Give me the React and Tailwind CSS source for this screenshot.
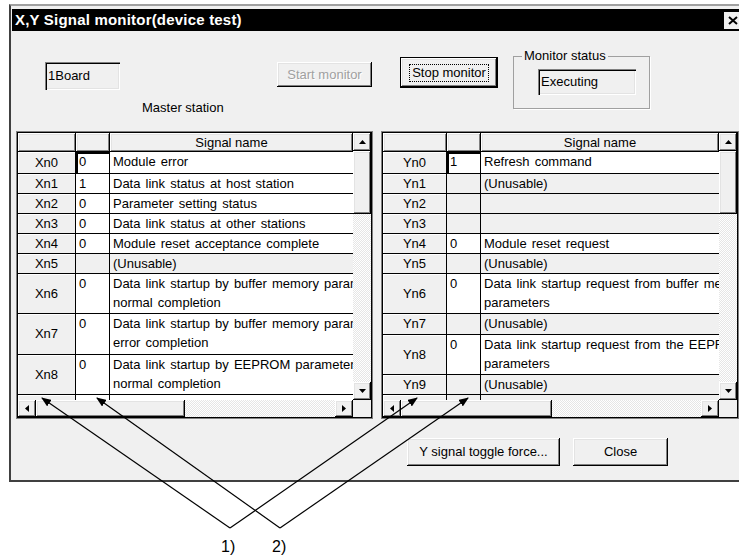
import React from "react";

const raised =
  "shadow-[inset_-1px_-1px_#000,inset_1px_1px_#fff,inset_-2px_-2px_#808080,inset_2px_2px_#e3e3e3]";
const sunken =
  "shadow-[inset_1px_1px_#808080,inset_2px_2px_#000,inset_-1px_-1px_#fff,inset_-2px_-2px_#e3e3e3]";
const dither =
  "bg-[image:repeating-conic-gradient(#fff_0_25%,#e6e6e6_0_50%)] bg-[length:2px_2px]";

const xRows = [
  { id: "Xn0", v: "0", text: ["Module error"], h: "h-[22px]", white: true, focus: true },
  { id: "Xn1", v: "1", text: ["Data link status at host station"], h: "h-[20px]", white: true },
  { id: "Xn2", v: "0", text: ["Parameter setting status"], h: "h-[20px]", white: true },
  { id: "Xn3", v: "0", text: ["Data link status at other stations"], h: "h-[20px]", white: true },
  { id: "Xn4", v: "0", text: ["Module reset acceptance complete"], h: "h-[20px]", white: true },
  { id: "Xn5", v: "", text: ["(Unusable)"], h: "h-[20px]" },
  { id: "Xn6", v: "0", text: ["Data link startup by buffer memory parameter", "normal completion"], h: "h-[40px]", white: true },
  { id: "Xn7", v: "0", text: ["Data link startup by buffer memory parameter", "error completion"], h: "h-[41px]", white: true },
  { id: "Xn8", v: "0", text: ["Data link startup by EEPROM parameter", "normal completion"], h: "h-[40px]", white: true },
  { id: "Xn9", v: "0", text: ["Data link startup by EEPROM parameter", "error completion"], h: "h-[40px]", white: true },
];

const yRows = [
  { id: "Yn0", v: "1", text: ["Refresh command"], h: "h-[22px]", white: true, focus: true },
  { id: "Yn1", v: "", text: ["(Unusable)"], h: "h-[20px]" },
  { id: "Yn2", v: "", text: [""], h: "h-[20px]" },
  { id: "Yn3", v: "", text: [""], h: "h-[20px]" },
  { id: "Yn4", v: "0", text: ["Module reset request"], h: "h-[20px]", white: true },
  { id: "Yn5", v: "", text: ["(Unusable)"], h: "h-[20px]" },
  { id: "Yn6", v: "0", text: ["Data link startup request from buffer memory", "parameters"], h: "h-[40px]", white: true },
  { id: "Yn7", v: "", text: ["(Unusable)"], h: "h-[21px]" },
  { id: "Yn8", v: "0", text: ["Data link startup request from the EEPROM", "parameters"], h: "h-[40px]", white: true },
  { id: "Yn9", v: "", text: ["(Unusable)"], h: "h-[20px]" },
  { id: "YnA", v: "", text: [""], h: "h-[20px]" },
];

function Arrow({ dir }) {
  const vert = dir === "up" || dir === "down";
  const pts = {
    up: "0,4 3.5,0 7,4",
    down: "0,0 7,0 3.5,4",
    left: "4,0 4,7 0,3.5",
    right: "0,0 0,7 4,3.5",
  }[dir];
  return (
    <svg width={vert ? 7 : 4} height={vert ? 4 : 7}>
      <polygon points={pts} fill="#000" />
    </svg>
  );
}

function ScrollBtn({ dir, className = "" }) {
  return (
    <div className={`flex shrink-0 items-center justify-center bg-[#f0f0f0] ${raised} ${className}`}>
      <Arrow dir={dir} />
    </div>
  );
}

function Row({ r, c1 }) {
  const bg = r.white ? "bg-white" : "bg-[#f0f0f0]";
  return (
    <div className={`flex shrink-0 ${r.h}`}>
      <div className={`${c1} flex shrink-0 items-center justify-center border-r border-b border-black bg-[#f0f0f0] shadow-[inset_1px_1px_#fff]`}>
        {r.id}
      </div>
      <div
        className={`w-[34px] shrink-0 border-r border-b border-black pl-[3px] leading-[19px] ${bg} ${
          r.focus ? "shadow-[inset_2px_2px_#000]" : ""
        }`}
      >
        {r.v}
      </div>
      <div className={`min-w-0 flex-1 overflow-hidden whitespace-nowrap border-b border-black pl-[3px] leading-[19px] [word-spacing:1.5px] ${bg}`}>
        {r.text.map((t, i) => (
          <div key={i}>{t}</div>
        ))}
      </div>
    </div>
  );
}

function Table({ rows, width, c1, thumb }) {
  return (
    <div className={`${width} h-[288px] shrink-0 border border-[#808080]`}>
      <div className="flex h-full flex-col border border-black bg-[#f0f0f0]">
        <div className="flex min-h-0 flex-1">
          <div className="flex min-w-0 flex-1 flex-col overflow-hidden">
            <div className="flex h-[19px] shrink-0">
              <div className={`${c1} shrink-0 ${raised}`} />
              <div className={`w-[34px] shrink-0 ${raised}`} />
              <div className={`flex flex-1 items-center justify-center ${raised}`}>Signal name</div>
            </div>
            {rows.map((r) => (
              <Row key={r.id} r={r} c1={c1} />
            ))}
          </div>
          <div className="flex w-[18px] shrink-0 flex-col">
            <ScrollBtn dir="up" className="h-[18px]" />
            <div className={`h-[63px] shrink-0 bg-[#f0f0f0] ${raised}`} />
            <div className={`flex-1 ${dither}`} />
            <ScrollBtn dir="down" className="h-[18px]" />
          </div>
        </div>
        <div className="flex h-[17px] shrink-0">
          <ScrollBtn dir="left" className="w-[18px]" />
          <div className={`${thumb} shrink-0 bg-[#f0f0f0] ${raised}`} />
          <div className={`flex-1 ${dither}`} />
          <ScrollBtn dir="right" className="w-[18px]" />
          <div className="w-[18px] shrink-0 bg-[#f0f0f0]" />
        </div>
      </div>
    </div>
  );
}

function Annotations() {
  return (
    <svg className="pointer-events-none absolute inset-0" width="739" height="556">
      <defs>
        <marker id="ah" markerWidth="10" markerHeight="8" refX="9" refY="4" orient="auto" markerUnits="userSpaceOnUse">
          <polygon points="0,0 10,4 0,8" fill="#000" />
        </marker>
      </defs>
      <g stroke="#000" strokeWidth="1.2" markerEnd="url(#ah)">
        <line x1="230" y1="528" x2="42" y2="398" />
        <line x1="230" y1="528" x2="417" y2="398" />
        <line x1="280" y1="528" x2="97" y2="398" />
        <line x1="280" y1="528" x2="468" y2="398" />
      </g>
      <text x="221" y="552" fontSize="16" fontFamily="Liberation Sans, Arial, sans-serif">1)</text>
      <text x="272" y="552" fontSize="16" fontFamily="Liberation Sans, Arial, sans-serif">2)</text>
    </svg>
  );
}

export default function App() {
  return (
    <div className="relative h-[556px] w-[739px] overflow-hidden bg-white font-['Liberation_Sans',Arial,sans-serif] text-[13px] text-black">
      <div className="ml-[9px] mt-[4px] w-[736px] border-t-2 border-l-2 border-b-2 border-t-[#a0a0a0] border-l-[#404040] border-b-[#404040] bg-[#f0f0f0] pt-[3px]">
        {/* title bar */}
        <div className="ml-[1px] flex h-[22px] items-center bg-black pl-[3px]">
          <span className="text-[15px] font-bold tracking-[0.2px] text-white">X,Y Signal monitor(device test)</span>
          <div className="ml-auto mr-[4px] flex h-[17px] w-[17px] items-center justify-center bg-[#f0f0f0]">
            <svg width="10" height="9">
              <path d="M1 1 L9 8 M9 1 L1 8" stroke="#000" strokeWidth="2" />
            </svg>
          </div>
        </div>

        {/* top controls */}
        <div className="flex h-[100px] items-start">
          <div className="ml-[34px] mt-[31px] flex w-[180px] flex-col">
            <div className={`flex h-[28px] w-[75px] items-center pl-[3px] ${sunken}`}>1Board</div>
            <div className="ml-[97px] mt-[10px] leading-[16px]">Master station</div>
          </div>
          <div className={`ml-[52px] mt-[31px] flex h-[25px] w-[95px] items-center justify-center text-[#a0a0a0] [text-shadow:1px_1px_#fff] ${raised}`}>
            Start monitor
          </div>
          <div className="ml-[28px] mt-[26px] h-[31px] w-[98px] border border-black">
            <div className={`flex h-full w-full items-center justify-center ${raised}`}>
              <span className="border border-dotted border-black px-[2px] leading-[16px]">Stop monitor</span>
            </div>
          </div>
          <fieldset className="ml-[15px] mt-[18px] h-[60px] w-[137px] border border-[#a0a0a0] px-[8px] shadow-[1px_1px_#fff]">
            <legend className="px-[2px] leading-[14px]">Monitor status</legend>
            <div className={`ml-[16px] mt-[6px] flex h-[26px] w-[98px] items-center pl-[3px] ${sunken}`}>Executing</div>
          </fieldset>
        </div>

        {/* tables */}
        <div className="ml-[5px] flex gap-[8px]">
          <Table rows={xRows} width="w-[357px]" c1="w-[58px]" thumb="w-[149px]" />
          <Table rows={yRows} width="w-[358px]" c1="w-[64px]" thumb="w-[151px]" />
        </div>

        {/* bottom buttons */}
        <div className="ml-[396px] mt-[19px] flex gap-[13px] pb-[14px]">
          <div className={`flex h-[28px] w-[153px] items-center justify-center ${raised}`}>Y signal toggle force...</div>
          <div className={`flex h-[28px] w-[95px] items-center justify-center ${raised}`}>Close</div>
        </div>
      </div>
      <Annotations />
    </div>
  );
}
